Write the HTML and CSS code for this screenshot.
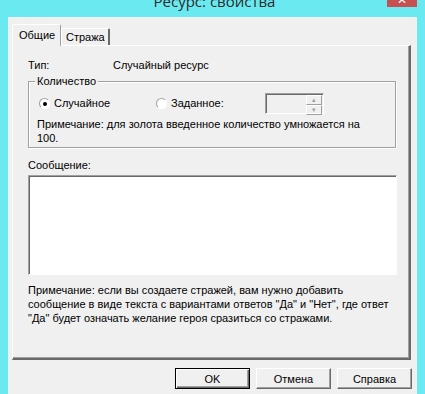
FILE: index.html
```html
<!DOCTYPE html>
<html lang="ru">
<head>
    <meta charset="UTF-8">
    <title>Ресурс: свойства</title>
    <link rel="stylesheet" href="styles.css">
</head>
<body>
    <div class="ventana">
        <div class="titulo">
            <div class="titulo-texto">Ресурс: свойства</div>
            <div class="cerrar">✕</div>
        </div>

        <div class="cliente">
            <div class="pestanas">
                <div class="pestana activa">Общие</div>
                <div class="pestana">Стража</div>
            </div>

            <div class="panel">
                <div class="fila-tipo">
                    <span class="etiqueta">Тип:</span>
                    <span>Случайный ресурс</span>
                </div>

                <div class="grupo">
                    <span class="grupo-titulo">Количество</span>
                    <div class="opciones">
                        <label class="radio"><span class="circulo marcado"></span>Случайное</label>
                        <label class="radio"><span class="circulo"></span>Заданное:</label>
                        <div class="spin">
                            <div class="spin-campo"></div>
                            <div class="spin-botones">
                                <div class="spin-btn">▴</div>
                                <div class="spin-btn">▾</div>
                            </div>
                        </div>
                    </div>
                    <p class="nota">Примечание: для золота введенное количество умножается на 100.</p>
                </div>

                <div class="mensaje-label">Сообщение:</div>
                <div class="memo"></div>

                <p class="nota-final">Примечание: если вы создаете стражей, вам нужно добавить сообщение в виде текста с вариантами ответов "Да" и "Нет", где ответ "Да" будет означать желание героя сразиться со стражами.</p>
            </div>

            <div class="botones">
                <button class="boton defecto">OK</button>
                <button class="boton">Отмена</button>
                <button class="boton">Справка</button>
            </div>
        </div>
    </div>
</body>
</html>
```

FILE: styles.css
```css
body {
    margin: 0;
    padding: 0;
    background-color: #6be9f1;
    font-family: 'Liberation Sans', Arial, sans-serif;
    font-size: 11px;
    color: #000;
    overflow: hidden;
}

.ventana {
    width: 425px;
    height: 394px;
}

.titulo {
    display: flow-root;
    height: 17px;
    position: relative;
    text-align: center;
}

.titulo-texto {
    margin-top: -9px;
    margin-left: 4px;
    height: 26px;
    font-family: 'Open Sans', 'DejaVu Sans', sans-serif;
    font-size: 15px;
    line-height: 20px;
    color: #2b2b2b;
}

.cerrar {
    position: absolute;
    left: 387px;
    top: 0;
    width: 30px;
    height: 7px;
    background-color: #c75050;
    color: #fff;
    font-size: 12px;
    line-height: 0;
    overflow: hidden;
    text-align: center;
}

.cliente {
    margin-left: 8px;
    width: 409px;
    height: 377px;
    background-color: #f0f0f0;
    box-sizing: border-box;
    padding: 7px 0 0 4px;
}

.pestanas {
    display: flex;
    align-items: flex-end;
    height: 21px;
    padding-left: 2px;
}

.pestana {
    width: 49px;
    height: 17px;
    line-height: 17px;
    padding: 0 4px;
    box-sizing: border-box;
    border-top: 1px solid #fff;
    border-left: 1px solid #fff;
    border-right: 2px solid #696969;
    background-color: #f0f0f0;
    border-radius: 2px 2px 0 0;
}

.pestana.activa {
    height: 22px;
    line-height: 21px;
    padding-left: 6px;
    margin-left: -2px;
    margin-bottom: -1px;
    position: relative;
    z-index: 1;
    border-right-color: #a0a0a0;
    border-right-width: 1px;
}

.panel {
    width: 399px;
    height: 315px;
    box-sizing: border-box;
    border-top: 1px solid #fff;
    border-left: 1px solid #fff;
    border-right: 2px solid #696969;
    border-bottom: 2px solid #696969;
    box-shadow: inset -1px -1px 0 #a0a0a0;
    padding: 12px 12px 0 15px;
}

.fila-tipo {
    display: flex;
    height: 14px;
    line-height: 14px;
}

.etiqueta {
    width: 85px;
}

.grupo {
    position: relative;
    margin-top: 9px;
    width: 368px;
    height: 67px;
    box-sizing: border-box;
    border: 1px solid #a0a0a0;
    box-shadow: 1px 1px 0 #fff, inset 1px 1px 0 #fff;
    padding: 10px 8px 0 8px;
}

.grupo-titulo {
    position: absolute;
    left: 6px;
    top: -8px;
    padding: 0 2px;
    line-height: 14px;
    background-color: #f0f0f0;
}

.opciones {
    display: flex;
    align-items: center;
    height: 22px;
}

.radio {
    display: flex;
    align-items: center;
    gap: 4px;
    width: 115px;
    margin-left: 2px;
}

.circulo {
    width: 11px;
    height: 11px;
    box-sizing: border-box;
    border-radius: 50%;
    border: 1px solid #a0a0a0;
    border-bottom-color: #fff;
    border-right-color: #fff;
    background-color: #fff;
    position: relative;
}

.circulo.marcado::after {
    content: "";
    position: absolute;
    left: 3px;
    top: 3px;
    width: 4px;
    height: 4px;
    border-radius: 50%;
    background-color: #000;
}

.spin {
    display: flex;
    margin-left: -6px;
    width: 59px;
    height: 21px;
    box-sizing: border-box;
    border: 1px solid #fff;
    border-top-color: #a0a0a0;
    border-left-color: #a0a0a0;
    box-shadow: inset 1px 1px 0 #696969;
}

.spin-campo {
    flex: 1;
}

.spin-botones {
    width: 16px;
    display: flex;
    flex-direction: column;
    padding: 1px 1px 1px 0;
}

.spin-btn {
    flex: 1;
    border-top: 1px solid #fff;
    border-left: 1px solid #fff;
    border-right: 1px solid #a0a0a0;
    border-bottom: 1px solid #a0a0a0;
    font-size: 7px;
    line-height: 8px;
    text-align: center;
    color: #a0a0a0;
}

.nota {
    margin: 3px 0 0 0;
    line-height: 14px;
    width: 330px;
}

.mensaje-label {
    margin-top: 10px;
    line-height: 14px;
}

.memo {
    margin-top: 3px;
    width: 369px;
    height: 100px;
    box-sizing: border-box;
    background-color: #fff;
    border: 1px solid #fff;
    border-top-color: #a0a0a0;
    border-left-color: #a0a0a0;
    box-shadow: inset 1px 1px 0 #696969;
}

.nota-final {
    margin: 8px 0 0 0;
    line-height: 14px;
    width: 372px;
}

.botones {
    display: flex;
    justify-content: flex-end;
    gap: 6px;
    margin-top: 8px;
    padding-right: 5px;
}

.boton {
    width: 75px;
    height: 21px;
    box-sizing: border-box;
    font-family: 'Liberation Sans', Arial, sans-serif;
    font-size: 11px;
    background-color: #f0f0f0;
    border: 1px solid #fff;
    border-right-color: #696969;
    border-bottom-color: #696969;
    box-shadow: inset -1px -1px 0 #a0a0a0;
    padding: 0;
}

.boton.defecto {
    border: 1px solid #000;
    box-shadow: inset 1px 1px 0 #fff, inset -1px -1px 0 #696969, inset -2px -2px 0 #a0a0a0;
}
```
